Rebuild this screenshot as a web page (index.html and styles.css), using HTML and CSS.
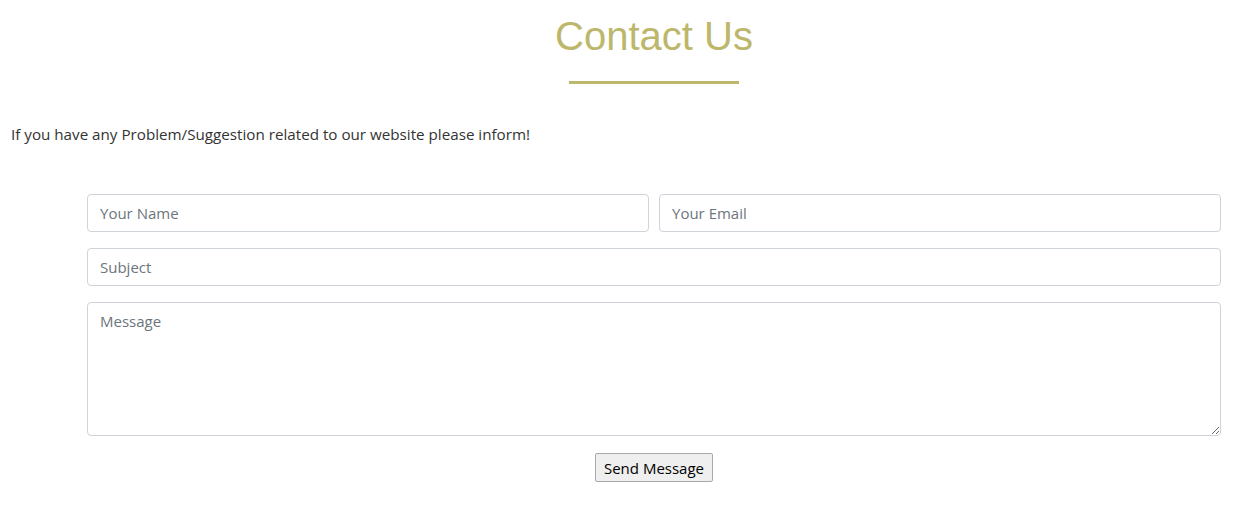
FILE: index.html
```html
<!DOCTYPE html>
<html>
<head>
<meta charset="utf-8">
<link rel="stylesheet" href="styles.css">
</head>
<body>
<header class="title-wrap">
  <h1 class="title">Contact Us</h1>
  <div class="title-rule"></div>
</header>
<p class="intro">If you have any Problem/Suggestion related to our website please inform!</p>
<main class="wrap">
  <form class="contact-form">
    <div class="row two">
      <input class="field" type="text" placeholder="Your Name">
      <input class="field" type="email" placeholder="Your Email">
    </div>
    <div class="row">
      <input class="field" type="text" placeholder="Subject">
    </div>
    <div class="row">
      <textarea class="field message" placeholder="Message"></textarea>
    </div>
    <div class="actions">
      <button class="send" type="button">Send Message</button>
    </div>
  </form>
</main>
</body>
</html>
```
FILE: styles.css
```css
html, body {
  margin: 0;
  padding: 0;
  background: #fff;
}
body {
  font-family: "Open Sans", "Noto Sans", sans-serif;
  color: #212529;
  width: 1250px;
  overflow: hidden;
}
.title-wrap {
  padding-left: 58px;
  display: flex;
  flex-direction: column;
  align-items: center;
  padding-top: 13px;
}
.title {
  margin: 0;
  font-family: "Liberation Sans", Arial, sans-serif;
  font-weight: 400;
  font-size: 40px;
  line-height: 46px;
  color: #bdb76b;
}
.title-rule {
  width: 170px;
  height: 3px;
  background: #bdb76b;
  margin-top: 22px;
}
.intro {
  margin: 38px 0 0 11px;
  font-size: 15.2px;
  line-height: 24px;
  color: #333;
}
.wrap {
  padding-left: 58px;
}
.contact-form {
  margin: 48px 29px 0 29px;
  display: flex;
  flex-direction: column;
  gap: 16px;
}
.row {
  display: flex;
  gap: 10px;
}
.field {
  flex: 1;
  min-width: 0;
  height: 38px;
  box-sizing: border-box;
  border: 1px solid #ced4da;
  border-radius: 4px;
  padding: 6px 12px;
  font-family: "Open Sans", "Noto Sans", sans-serif;
  font-size: 15px;
  line-height: 24px;
  color: #495057;
  background: #fff;
  outline: none;
}
.field::placeholder {
  color: #6c757d;
}
.message {
  height: 134px;
  resize: vertical;
}
.actions {
  display: flex;
  justify-content: center;
  margin-top: 1px;
}
.send {
  width: 118px;
  height: 29px;
  font-family: "Open Sans", "Noto Sans", sans-serif;
  font-size: 15px;
  color: #000;
  background: #efefef;
  border: 1px solid #a9a9a9;
  border-radius: 2px;
  padding: 0 6px;
}
```
